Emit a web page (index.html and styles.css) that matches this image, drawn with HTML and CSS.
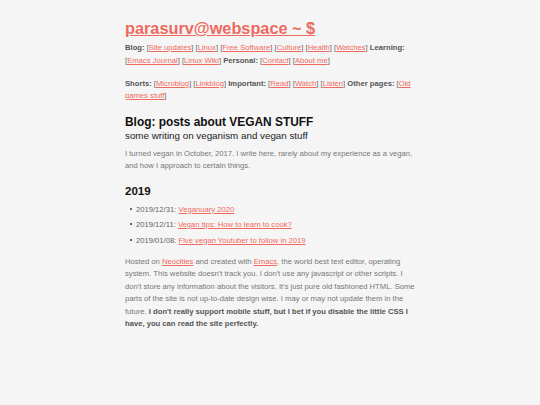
FILE: index.html
```html
<!DOCTYPE html>
<html lang="en">
<head>
<meta charset="utf-8">
<title>parasurv@webspace ~ $</title>
<link rel="stylesheet" href="styles.css">
</head>
<body>
<div class="page">
  <header class="site-header">
    <h1 class="site-title"><a href="#">parasurv@webspace ~ $</a></h1>
    <nav class="nav">
      <p><b>Blog:</b> [<a href="#">Site updates</a>] [<a href="#">Linux</a>] [<a href="#">Free Software</a>] [<a href="#">Culture</a>] [<a href="#">Health</a>] [<a href="#">Watches</a>] <b>Learning:</b> [<a href="#">Emacs Journal</a>] [<a href="#">Linux Wiki</a>] <b>Personal:</b> [<a href="#">Contact</a>] [<a href="#">About me</a>]</p>
      <p><b>Shorts:</b> [<a href="#">Microblog</a>] [<a href="#">Linkblog</a>] <b>Important:</b> [<a href="#">Read</a>] [<a href="#">Watch</a>] [<a href="#">Listen</a>] <b>Other pages:</b> [<a href="#">Old games stuff</a>]</p>
    </nav>
  </header>
  <main>
    <h2 class="title">Blog: posts about VEGAN STUFF</h2>
    <div class="subtitle">some writing on veganism and vegan stuff</div>
    <p class="intro">I turned vegan in October, 2017. I write here, rarely about my experience as a vegan, and how I approach to certain things.</p>
    <h3 class="year">2019</h3>
    <ul class="posts">
      <li>2019/12/31: <a href="#">Veganuary 2020</a></li>
      <li>2019/12/11: <a href="#">Vegan tips: How to learn to cook?</a></li>
      <li>2019/01/08: <a href="#">Five vegan Youtuber to follow in 2019</a></li>
    </ul>
  </main>
  <footer class="footer">
    <p>Hosted on <a href="#">Neocities</a> and created with <a href="#">Emacs</a>, the world best text editor, operating system. This website doesn't track you. I don't use any javascript or other scripts. I don't store any information about the visitors. It's just pure old fashioned HTML. Some parts of the site is not up-to-date design wise. I may or may not update them in the future. <b>I don't really support mobile stuff, but I bet if you disable the little CSS I have, you can read the site perfectly.</b></p>
  </footer>
</div>
</body>
</html>
```
FILE: styles.css
```css
html { background: #f5f5f5; }
body {
  margin: 0;
  background: #f5f5f5;
  font-family: "Liberation Sans", Arial, sans-serif;
  font-size: 7.65px;
  line-height: 12.5px;
  color: #666;
}
.page {
  width: 290px;
  margin: 0 auto;
  padding-top: 16px;
}
a { color: #f06a60; }
.site-title {
  margin: 0 0 2px;
  font-size: 16.3px;
  line-height: 24px;
  font-weight: bold;
}
.site-title a { color: #ec6a5f; }
.nav p { margin: 0 0 10.5px; color: #666; }
.nav p:last-child { margin-bottom: 0; }
.nav b { color: #555; }
.title {
  margin: 11px 0 0;
  font-size: 11.9px;
  line-height: 16px;
  color: #111;
}
.subtitle {
  font-size: 9.8px;
  line-height: 12px;
  color: #222;
}
.intro { margin: 6px 0 0; color: #777; }
.year {
  margin: 11px 0 0;
  font-size: 11.5px;
  line-height: 14px;
  color: #111;
}
.posts {
  margin: 4px 0 0;
  padding-left: 5px;
  list-style: none;
  color: #666;
}
.posts li { line-height: 15.5px; }
.posts li::before {
  content: "";
  display: inline-block;
  width: 2px;
  height: 2px;
  background: #666;
  margin-right: 4px;
  vertical-align: 2px;
}
.footer p { margin: 8px 0 0; color: #777; line-height: 12.4px; }
.footer b { color: #555; }
```
